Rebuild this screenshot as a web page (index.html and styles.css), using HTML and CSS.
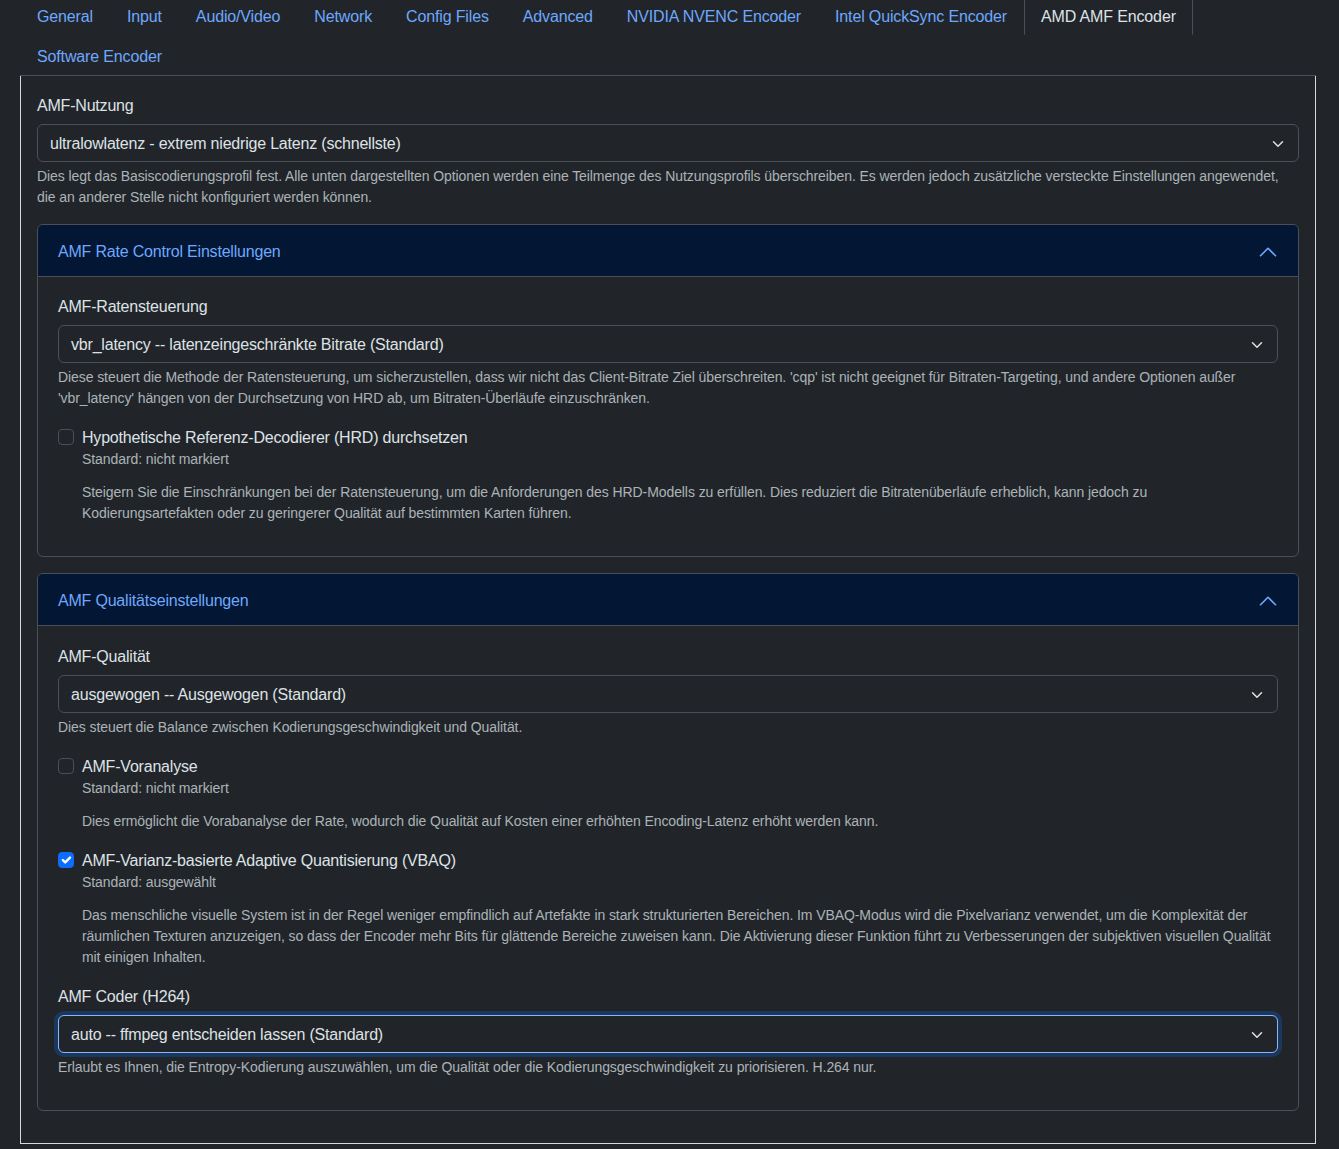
FILE: index.html
```html
<!DOCTYPE html>
<html lang="de">
<head>
    <meta charset="UTF-8">
    <meta name="viewport" content="width=device-width, initial-scale=1.0">
    <title>Konfiguration</title>
    <link rel="stylesheet" href="styles.css">
</head>
<body>
    <div class="page">
        <ul class="nav-tabs">
            <li><a class="nav-link">General</a></li>
            <li><a class="nav-link">Input</a></li>
            <li><a class="nav-link">Audio/Video</a></li>
            <li><a class="nav-link">Network</a></li>
            <li><a class="nav-link">Config Files</a></li>
            <li><a class="nav-link">Advanced</a></li>
            <li><a class="nav-link">NVIDIA NVENC Encoder</a></li>
            <li><a class="nav-link">Intel QuickSync Encoder</a></li>
            <li><a class="nav-link active">AMD AMF Encoder</a></li>
            <li><a class="nav-link">Software Encoder</a></li>
        </ul>

        <div class="tab-content">
            <div class="group">
                <label class="form-label">AMF-Nutzung</label>
                <div class="form-select">
                    <span>ultralowlatenz - extrem niedrige Latenz (schnellste)</span>
                    <svg class="caret" viewBox="0 0 16 16" width="16" height="12"><path d="m2 5 6 6 6-6" fill="none" stroke="#dee2e6" stroke-width="2" stroke-linecap="round" stroke-linejoin="round"/></svg>
                </div>
                <div class="form-text">Dies legt das Basiscodierungsprofil fest. Alle unten dargestellten Optionen werden eine Teilmenge des Nutzungsprofils überschreiben. Es werden jedoch zusätzliche versteckte Einstellungen angewendet, die an anderer Stelle nicht konfiguriert werden können.</div>
            </div>

            <div class="accordion">
                <div class="accordion-header">
                    <span>AMF Rate Control Einstellungen</span>
                    <svg class="chevron" viewBox="0 0 16 16" width="20" height="20"><path d="M2 11 8 5l6 6" fill="none" stroke="#6ea8fe" stroke-width="1.3" stroke-linecap="round" stroke-linejoin="round"/></svg>
                </div>
                <div class="accordion-body">
                    <div class="group">
                        <label class="form-label">AMF-Ratensteuerung</label>
                        <div class="form-select">
                            <span>vbr_latency -- latenzeingeschränkte Bitrate (Standard)</span>
                            <svg class="caret" viewBox="0 0 16 16" width="16" height="12"><path d="m2 5 6 6 6-6" fill="none" stroke="#dee2e6" stroke-width="2" stroke-linecap="round" stroke-linejoin="round"/></svg>
                        </div>
                        <div class="form-text">Diese steuert die Methode der Ratensteuerung, um sicherzustellen, dass wir nicht das Client-Bitrate Ziel überschreiten. 'cqp' ist nicht geeignet für Bitraten-Targeting, und andere Optionen außer 'vbr_latency' hängen von der Durchsetzung von HRD ab, um Bitraten-Überläufe einzuschränken.</div>
                    </div>

                    <div class="group">
                        <div class="form-check">
                            <span class="check-box"></span>
                            <label class="form-check-label">Hypothetische Referenz-Decodierer (HRD) durchsetzen</label>
                        </div>
                        <div class="check-info">
                            <div class="form-text default">Standard: nicht markiert</div>
                            <div class="form-text desc">Steigern Sie die Einschränkungen bei der Ratensteuerung, um die Anforderungen des HRD-Modells zu erfüllen. Dies reduziert die Bitratenüberläufe erheblich, kann jedoch zu Kodierungsartefakten oder zu geringerer Qualität auf bestimmten Karten führen.</div>
                        </div>
                    </div>
                </div>
            </div>

            <div class="accordion">
                <div class="accordion-header">
                    <span>AMF Qualitätseinstellungen</span>
                    <svg class="chevron" viewBox="0 0 16 16" width="20" height="20"><path d="M2 11 8 5l6 6" fill="none" stroke="#6ea8fe" stroke-width="1.3" stroke-linecap="round" stroke-linejoin="round"/></svg>
                </div>
                <div class="accordion-body">
                    <div class="group">
                        <label class="form-label">AMF-Qualität</label>
                        <div class="form-select">
                            <span>ausgewogen -- Ausgewogen (Standard)</span>
                            <svg class="caret" viewBox="0 0 16 16" width="16" height="12"><path d="m2 5 6 6 6-6" fill="none" stroke="#dee2e6" stroke-width="2" stroke-linecap="round" stroke-linejoin="round"/></svg>
                        </div>
                        <div class="form-text">Dies steuert die Balance zwischen Kodierungsgeschwindigkeit und Qualität.</div>
                    </div>

                    <div class="group">
                        <div class="form-check">
                            <span class="check-box"></span>
                            <label class="form-check-label">AMF-Voranalyse</label>
                        </div>
                        <div class="check-info">
                            <div class="form-text default">Standard: nicht markiert</div>
                            <div class="form-text desc">Dies ermöglicht die Vorabanalyse der Rate, wodurch die Qualität auf Kosten einer erhöhten Encoding-Latenz erhöht werden kann.</div>
                        </div>
                    </div>

                    <div class="group">
                        <div class="form-check">
                            <span class="check-box checked">
                                <svg viewBox="0 0 20 20" width="16" height="16"><path d="m6 10 3 3 6-6" fill="none" stroke="#fff" stroke-width="3" stroke-linecap="round" stroke-linejoin="round"/></svg>
                            </span>
                            <label class="form-check-label">AMF-Varianz-basierte Adaptive Quantisierung (VBAQ)</label>
                        </div>
                        <div class="check-info">
                            <div class="form-text default">Standard: ausgewählt</div>
                            <div class="form-text desc">Das menschliche visuelle System ist in der Regel weniger empfindlich auf Artefakte in stark strukturierten Bereichen. Im VBAQ-Modus wird die Pixelvarianz verwendet, um die Komplexität der räumlichen Texturen anzuzeigen, so dass der Encoder mehr Bits für glättende Bereiche zuweisen kann. Die Aktivierung dieser Funktion führt zu Verbesserungen der subjektiven visuellen Qualität mit einigen Inhalten.</div>
                        </div>
                    </div>

                    <div class="group">
                        <label class="form-label">AMF Coder (H264)</label>
                        <div class="form-select focus">
                            <span>auto -- ffmpeg entscheiden lassen (Standard)</span>
                            <svg class="caret" viewBox="0 0 16 16" width="16" height="12"><path d="m2 5 6 6 6-6" fill="none" stroke="#dee2e6" stroke-width="2" stroke-linecap="round" stroke-linejoin="round"/></svg>
                        </div>
                        <div class="form-text">Erlaubt es Ihnen, die Entropy-Kodierung auszuwählen, um die Qualität oder die Kodierungsgeschwindigkeit zu priorisieren. H.264 nur.</div>
                    </div>
                </div>
            </div>
        </div>
    </div>
</body>
</html>
```

FILE: styles.css
```css
:root {
    --bg: #212529;
    --text: #dee2e6;
    --muted: rgba(222, 226, 230, 0.75);
    --link: #6ea8fe;
    --border: #495057;
    --header-bg: #031633;
}

* {
    margin: 0;
    padding: 0;
    box-sizing: border-box;
}

html, body {
    background: var(--bg);
}

body {
    font-family: "Liberation Sans", Arial, sans-serif;
    font-size: 16px;
    line-height: 1.5;
    letter-spacing: -0.2px;
    color: var(--text);
    overflow: hidden;
}

.page {
    padding: 0 23px 0 20px;
}

/* tabs */
.nav-tabs {
    list-style: none;
    display: flex;
    flex-wrap: wrap;
    margin-top: -5px;
    border-bottom: 1px solid var(--border);
}

.nav-link {
    display: block;
    padding: 9px 16px 5px;
    border: 1px solid transparent;
    border-top-left-radius: 6px;
    border-top-right-radius: 6px;
    color: var(--link);
    letter-spacing: -0.14px;
    cursor: pointer;
}

.nav-link.active {
    color: var(--text);
    background: var(--bg);
    border-color: var(--border) var(--border) transparent;
}

.tab-content {
    border: 1px solid #d5d8dc;
    border-top: none;
    padding: 17px 16px 16px;
}

/* forms */
.group {
    margin-bottom: 16px;
}

.form-label {
    display: block;
    margin-bottom: 7px;
    padding-top: 1px;
    line-height: 23px;
}

.form-select {
    display: flex;
    align-items: center;
    justify-content: space-between;
    height: 38px;
    padding: 1px 12px 0;
    border: 1px solid var(--border);
    border-radius: 6px;
    background: var(--bg);
}

.form-select.focus {
    border-color: #86b7fe;
    box-shadow: 0 0 0 4px rgba(13, 110, 253, 0.25);
}

.caret {
    flex-shrink: 0;
}

.form-text {
    margin-top: 3px;
    padding-top: 1px;
    font-size: 14px;
    line-height: 21px;
    letter-spacing: -0.08px;
    color: var(--muted);
}

.form-check {
    display: flex;
    align-items: flex-start;
}

.form-check-label {
    padding-top: 1px;
    line-height: 23px;
}

.check-box {
    flex-shrink: 0;
    width: 16px;
    height: 16px;
    margin: 4px 8px 0 0;
    border: 1px solid var(--border);
    border-radius: 4px;
    background: var(--bg);
}

.check-box.checked {
    background: #0d6efd;
    border-color: #0d6efd;
}

.check-box svg {
    display: block;
    margin: -1px;
}

.check-info {
    padding-left: 24px;
}

.check-info .default {
    margin-top: -1px;
}

.check-info .desc {
    margin-top: 11px;
}

/* accordion */
.accordion {
    border: 1px solid var(--border);
    border-radius: 6px;
    overflow: hidden;
    margin-bottom: 16px;
}

.accordion-header {
    display: flex;
    align-items: center;
    justify-content: space-between;
    height: 52px;
    padding: 2px 20px 0;
    background: var(--header-bg);
    color: var(--link);
    border-bottom: 1px solid var(--border);
}

.accordion-body {
    padding: 17px 20px;
}

.accordion-body .group:last-child {
    margin-bottom: 15px;
}

.accordion + .accordion .accordion-body {
    padding-top: 18px;
}
```
